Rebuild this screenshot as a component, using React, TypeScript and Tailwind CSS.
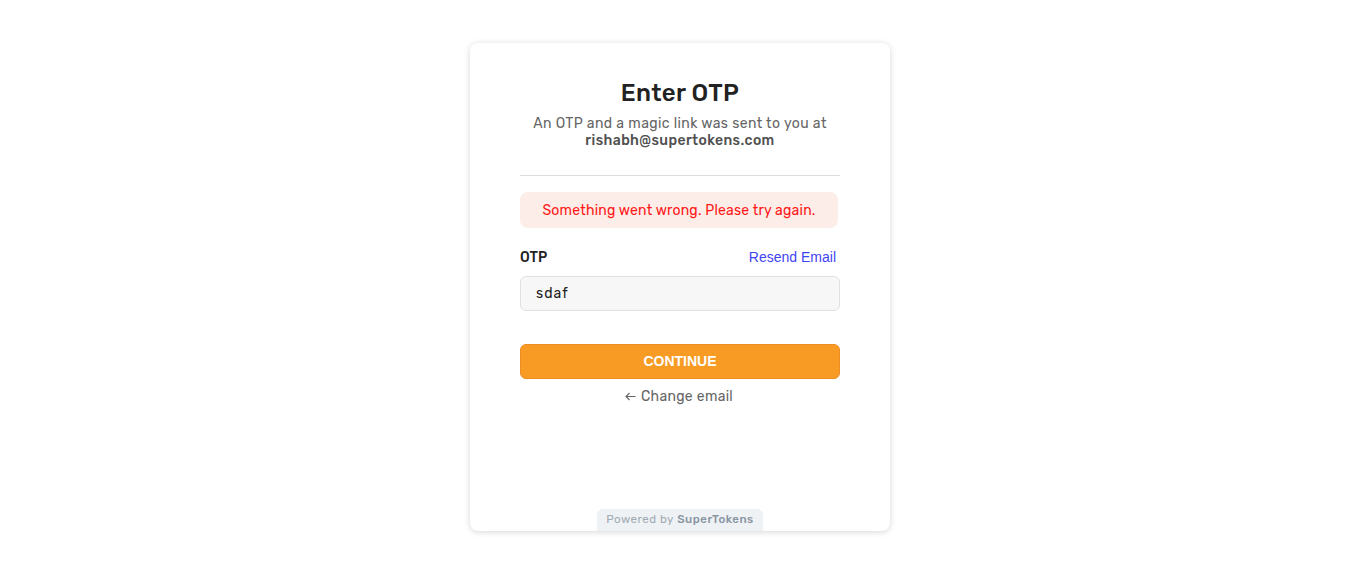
import React from "react";

export default function App() {
  return (
    <div className="min-h-[573px] w-full bg-white flex justify-center" style={{ fontFamily: "Rubik, Roboto, 'Noto Sans', sans-serif" }}>
      <div className="mt-[43px] mr-px w-[420px] h-[488px] bg-white rounded-lg shadow-[0_1px_6px_rgba(0,0,0,0.16)] flex flex-col items-center overflow-hidden">
        <div className="w-[320px] flex flex-col items-center pt-[34px]">
          <h1 className="text-[24px] leading-[32px] font-medium text-[#222222] tracking-[0.3px]">Enter OTP</h1>
          <p className="mt-[6px] text-[14px] leading-[17px] text-[#656565] text-center tracking-[0.4px]">
            An OTP and a magic link was sent to you at
            <br />
            <span className="font-medium text-[#505050]">rishabh@supertokens.com</span>
          </p>
          <div className="w-full h-px bg-[#dddddd] mt-[26px]" />
          <div className="mt-[16px] h-[36px] w-[318px] self-start rounded-lg bg-[#fdede8] flex items-center justify-center text-[14px] text-[#ff1717] tracking-[0.2px]">
            Something went wrong. Please try again.
          </div>
          <div className="w-full mt-[19px] flex justify-between items-center">
            <span className="text-[14px] font-medium text-[#222222]">OTP</span>
            <span className="text-[14px] text-[#3f44f1] mr-[4px]" style={{ fontFamily: "'Liberation Sans', Arial, sans-serif" }}>Resend Email</span>
          </div>
          <div className="w-full mt-[8px] h-[35px] rounded-md bg-[#f7f7f7] border border-[#e0e0e0] flex items-center px-[15px] text-[14px] text-[#222222] tracking-[1px]">
            sdaf
          </div>
          <button className="w-full mt-[33px] h-[35px] rounded-md bg-[#f89b24] border border-[#ee8d23] text-white text-[14px] font-bold flex items-center justify-center" style={{ fontFamily: "'Liberation Sans', Arial, sans-serif" }}>
            CONTINUE
          </button>
          <div className="mt-[7px] text-[14px] text-[#656565] tracking-[0.3px] flex items-center gap-[5px] mr-[2px]">
            <svg width="11" height="9" viewBox="0 0 11 9" fill="none" stroke="#656565" strokeWidth="1.1">
              <path d="M10.5 4.5H1M4.5 1L1 4.5L4.5 8" />
            </svg>
            <span>Change email</span>
          </div>
        </div>
        <div className="mt-auto h-[22px] px-[9px] rounded-t-md bg-[#eef2f5] flex items-center text-[11.5px] text-[#a1aab3] tracking-[0.5px]">
          Powered by&nbsp;<span className="font-medium text-[#8a96a2]">SuperTokens</span>
        </div>
      </div>
    </div>
  );
}
